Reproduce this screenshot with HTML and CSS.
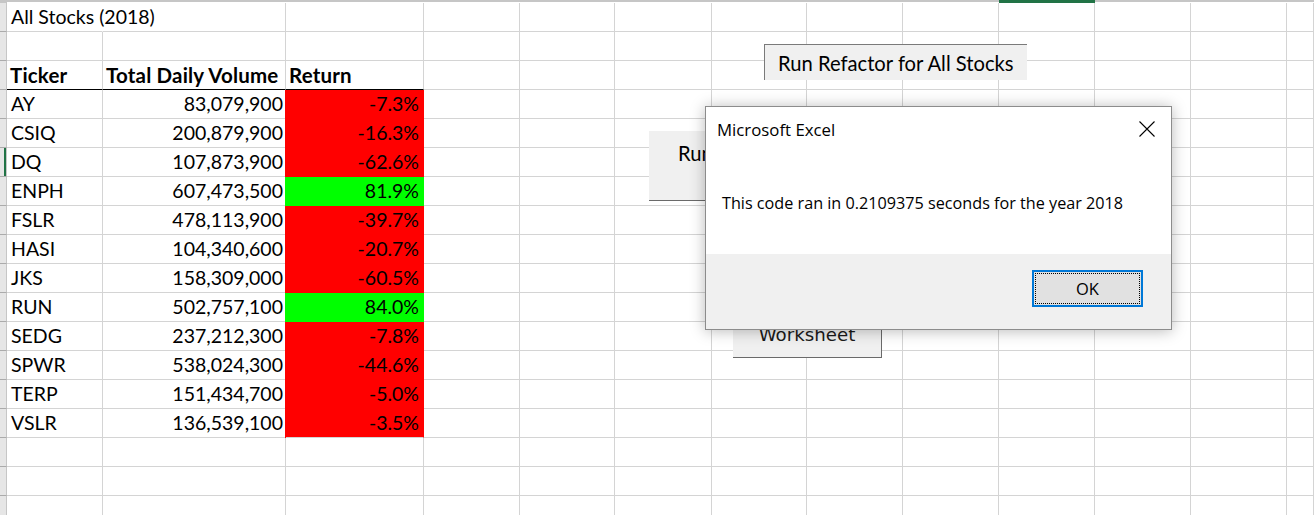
FILE: index.html
```html
<!DOCTYPE html>
<html lang="en">
<head>
<meta charset="utf-8">
<title>All Stocks (2018)</title>
<link rel="stylesheet" href="styles.css">
</head>
<body>
<div class="sheet">
  <div class="row top"><i class="rh"></i><i></i><i></i><i></i><i></i><i></i><i></i><i></i><i></i><i></i><i class="sel"></i><i></i><i></i><i></i></div>
  <div class="row"><i class="rh"></i><div class="c title">All Stocks (2018)</div><i></i><i></i><i></i><i></i><i></i><i></i><i></i><i></i><i></i><i></i><i></i><i></i></div>
  <div class="row"><i class="rh"></i><i></i><i></i><i></i><i></i><i></i><i></i><i></i><i></i><i></i><i></i><i></i><i></i><i></i></div>
  <div class="row head"><i class="rh"></i><div class="c hd">Ticker</div><div class="c hd">Total Daily Volume</div><div class="c hd">Return</div><i></i><i></i><i></i><i></i><i></i><i></i><i></i><i></i><i></i><i></i></div>
  <div class="row"><i class="rh"></i><div class="c">AY</div><div class="c num">83,079,900</div><div class="c ret neg">-7.3%</div><i></i><i></i><i></i><i></i><i></i><i></i><i></i><i></i><i></i><i></i></div>
  <div class="row"><i class="rh"></i><div class="c">CSIQ</div><div class="c num">200,879,900</div><div class="c ret neg">-16.3%</div><i></i><i></i><i></i><i></i><i></i><i></i><i></i><i></i><i></i><i></i></div>
  <div class="row"><i class="rh rsel"></i><div class="c">DQ</div><div class="c num">107,873,900</div><div class="c ret neg">-62.6%</div><i></i><i></i><i></i><i></i><i></i><i></i><i></i><i></i><i></i><i></i></div>
  <div class="row"><i class="rh"></i><div class="c">ENPH</div><div class="c num">607,473,500</div><div class="c ret pos">81.9%</div><i></i><i></i><i></i><i></i><i></i><i></i><i></i><i></i><i></i><i></i></div>
  <div class="row"><i class="rh"></i><div class="c">FSLR</div><div class="c num">478,113,900</div><div class="c ret neg">-39.7%</div><i></i><i></i><i></i><i></i><i></i><i></i><i></i><i></i><i></i><i></i></div>
  <div class="row"><i class="rh"></i><div class="c">HASI</div><div class="c num">104,340,600</div><div class="c ret neg">-20.7%</div><i></i><i></i><i></i><i></i><i></i><i></i><i></i><i></i><i></i><i></i></div>
  <div class="row"><i class="rh"></i><div class="c">JKS</div><div class="c num">158,309,000</div><div class="c ret neg">-60.5%</div><i></i><i></i><i></i><i></i><i></i><i></i><i></i><i></i><i></i><i></i></div>
  <div class="row"><i class="rh"></i><div class="c">RUN</div><div class="c num">502,757,100</div><div class="c ret pos">84.0%</div><i></i><i></i><i></i><i></i><i></i><i></i><i></i><i></i><i></i><i></i></div>
  <div class="row"><i class="rh"></i><div class="c">SEDG</div><div class="c num">237,212,300</div><div class="c ret neg">-7.8%</div><i></i><i></i><i></i><i></i><i></i><i></i><i></i><i></i><i></i><i></i></div>
  <div class="row"><i class="rh"></i><div class="c">SPWR</div><div class="c num">538,024,300</div><div class="c ret neg">-44.6%</div><i></i><i></i><i></i><i></i><i></i><i></i><i></i><i></i><i></i><i></i></div>
  <div class="row"><i class="rh"></i><div class="c">TERP</div><div class="c num">151,434,700</div><div class="c ret neg">-5.0%</div><i></i><i></i><i></i><i></i><i></i><i></i><i></i><i></i><i></i><i></i></div>
  <div class="row"><i class="rh"></i><div class="c">VSLR</div><div class="c num">136,539,100</div><div class="c ret neg last">-3.5%</div><i></i><i></i><i></i><i></i><i></i><i></i><i></i><i></i><i></i><i></i></div>
  <div class="row"><i class="rh"></i><i></i><i></i><i></i><i></i><i></i><i></i><i></i><i></i><i></i><i></i><i></i><i></i><i></i></div>
  <div class="row"><i class="rh"></i><i></i><i></i><i></i><i></i><i></i><i></i><i></i><i></i><i></i><i></i><i></i><i></i><i></i></div>
  <div class="row"><i class="rh"></i><i></i><i></i><i></i><i></i><i></i><i></i><i></i><i></i><i></i><i></i><i></i><i></i><i></i></div>
</div>

<button class="shape btn-refactor">Run Refactor for All Stocks</button>
<button class="shape btn-run">Run Analysis for All Stocks</button>
<button class="shape btn-clear"><span>Clear</span><span>Worksheet</span></button>

<div class="dialog" role="dialog">
  <div class="dlg-title">
    <span>Microsoft Excel</span>
    <svg class="close" width="16" height="16" viewBox="0 0 16 16"><path d="M0.5 0.5L15.5 15.5M15.5 0.5L0.5 15.5" stroke="#000" stroke-width="1.1" fill="none"/></svg>
  </div>
  <div class="dlg-body">This code ran in 0.2109375 seconds for the year 2018</div>
  <div class="dlg-footer"><button class="ok"><span>OK</span></button></div>
</div>
</body>
</html>
```

FILE: styles.css
```css
html, body {
  margin: 0;
  padding: 0;
}
body {
  width: 1314px;
  height: 515px;
  overflow: hidden;
  background: #fff;
  font-family: Lato, "Open Sans", sans-serif;
  color: #000;
  position: relative;
}

.sheet {
  display: flex;
  flex-direction: column;
  width: 1314px;
  height: 515px;
  overflow: hidden;
}

.row {
  display: grid;
  grid-template-columns: 7px 96px 183px 138px 96px 95px 97px 95px 96px 96px 96px 96px 96px 27px;
  height: 29px;
  flex: none;
}

.row > * {
  box-sizing: border-box;
  border-right: 1px solid #d4d4d4;
  border-bottom: 1px solid #d4d4d4;
  font-style: normal;
  min-width: 0;
}

.row > .rh {
  background: #e6e6e6;
  border-right-color: #c6c6c6;
  border-bottom-color: #ababab;
}
.row > .rsel {
  box-shadow: inset -2px 0 0 #217346;
}

.row.top {
  height: 3px;
}
.row.top > * {
  border-bottom: 0;
  border-right-color: transparent;
  background: linear-gradient(#c6c6c6 0 2px, #fff 2px);
}
.row.top > .rh {
  background: #c6c6c6;
}
.row.top > .sel {
  background: #217346;
}

.c {
  font-size: 19.5px;
  line-height: 28px;
  padding: 0 3px 0 4px;
  white-space: nowrap;
  position: relative;
}
.c.title {
  border-right-color: transparent;
  overflow: visible;
  z-index: 1;
}
.head > .c {
  border-bottom-color: #000;
}
.c.hd {
  font-weight: 700;
  font-size: 20.5px;
  letter-spacing: 0.18px;
  padding-left: 3px;
}
.c.num {
  text-align: right;
  padding-right: 2px;
}
.c.ret {
  text-align: right;
  padding-right: 4px;
}
.c.neg {
  background: #ff0000;
  border-right-color: #ff0000;
  border-bottom-color: #ff0000;
  box-shadow: -1px 0 0 #ff0000;
}
.c.pos {
  background: #00ff00;
  border-right-color: #00ff00;
  border-bottom-color: #00ff00;
  box-shadow: -1px 0 0 #00ff00;
}
.c.last {
  border-bottom-color: #d4d4d4;
}

/* floating form buttons on the sheet */
.shape {
  position: absolute;
  box-sizing: border-box;
  margin: 0;
  padding: 0;
  background: #f0f0f0;
  border: 0;
  color: #000;
  font-family: Lato, sans-serif;
  font-size: 20.2px;
  white-space: nowrap;
  text-align: left;
}
.btn-refactor {
  left: 764px;
  top: 44px;
  width: 263px;
  height: 36px;
  border-top: 1px solid #7a7a7a;
  border-left: 1px solid #7a7a7a;
  padding-left: 13px;
  line-height: 36px;
}
.btn-run {
  left: 649px;
  top: 131px;
  width: 240px;
  height: 70px;
  border-bottom: 1px solid #6a6a6a;
  padding: 6px 0 0 29px;
  line-height: 32px;
  display: flex;
  align-items: flex-start;
}
.btn-clear {
  left: 733px;
  top: 290px;
  width: 149px;
  height: 68px;
  border-right: 1px solid #6a6a6a;
  border-bottom: 1px solid #6a6a6a;
  display: flex;
  flex-direction: column;
  justify-content: flex-end;
  align-items: center;
  padding-bottom: 11px;
  font-family: "DejaVu Sans", sans-serif;
  font-size: 18.2px;
  line-height: 22px;
  color: #1a1a1a;
}

/* message box */
.dialog {
  position: absolute;
  left: 705px;
  top: 106px;
  width: 467px;
  height: 224px;
  box-sizing: border-box;
  border: 1px solid #8c8c8c;
  background: #fff;
  box-shadow: 0 1px 14px rgba(0, 0, 0, 0.28);
  display: flex;
  flex-direction: column;
  font-family: "Open Sans", "Noto Sans", sans-serif;
  z-index: 5;
}
.dlg-title {
  height: 44px;
  display: flex;
  align-items: center;
  justify-content: space-between;
  padding: 0 16px 0 11px;
  font-size: 16.8px;
  color: #000;
}
.close {
  display: block;
}
.dlg-body {
  flex: 1;
  display: flex;
  align-items: center;
  padding: 0 0 0 16px;
  font-size: 16.2px;
  color: #000;
}
.dlg-footer {
  height: 75px;
  background: #f0f0f0;
  display: flex;
  justify-content: flex-end;
  align-items: flex-start;
  padding: 16px 28px 0 0;
  box-sizing: border-box;
}
.ok {
  width: 111px;
  height: 37px;
  box-sizing: border-box;
  margin: 0;
  padding: 1px;
  border: 2px solid #0078d7;
  background: #e1e1e1;
  font-family: "Open Sans", "Noto Sans", sans-serif;
  font-size: 16.5px;
  color: #000;
  display: flex;
}
.ok span {
  flex: 1;
  display: flex;
  align-items: center;
  justify-content: center;
  outline: 1px dotted #000;
  outline-offset: -1px;
}
```
